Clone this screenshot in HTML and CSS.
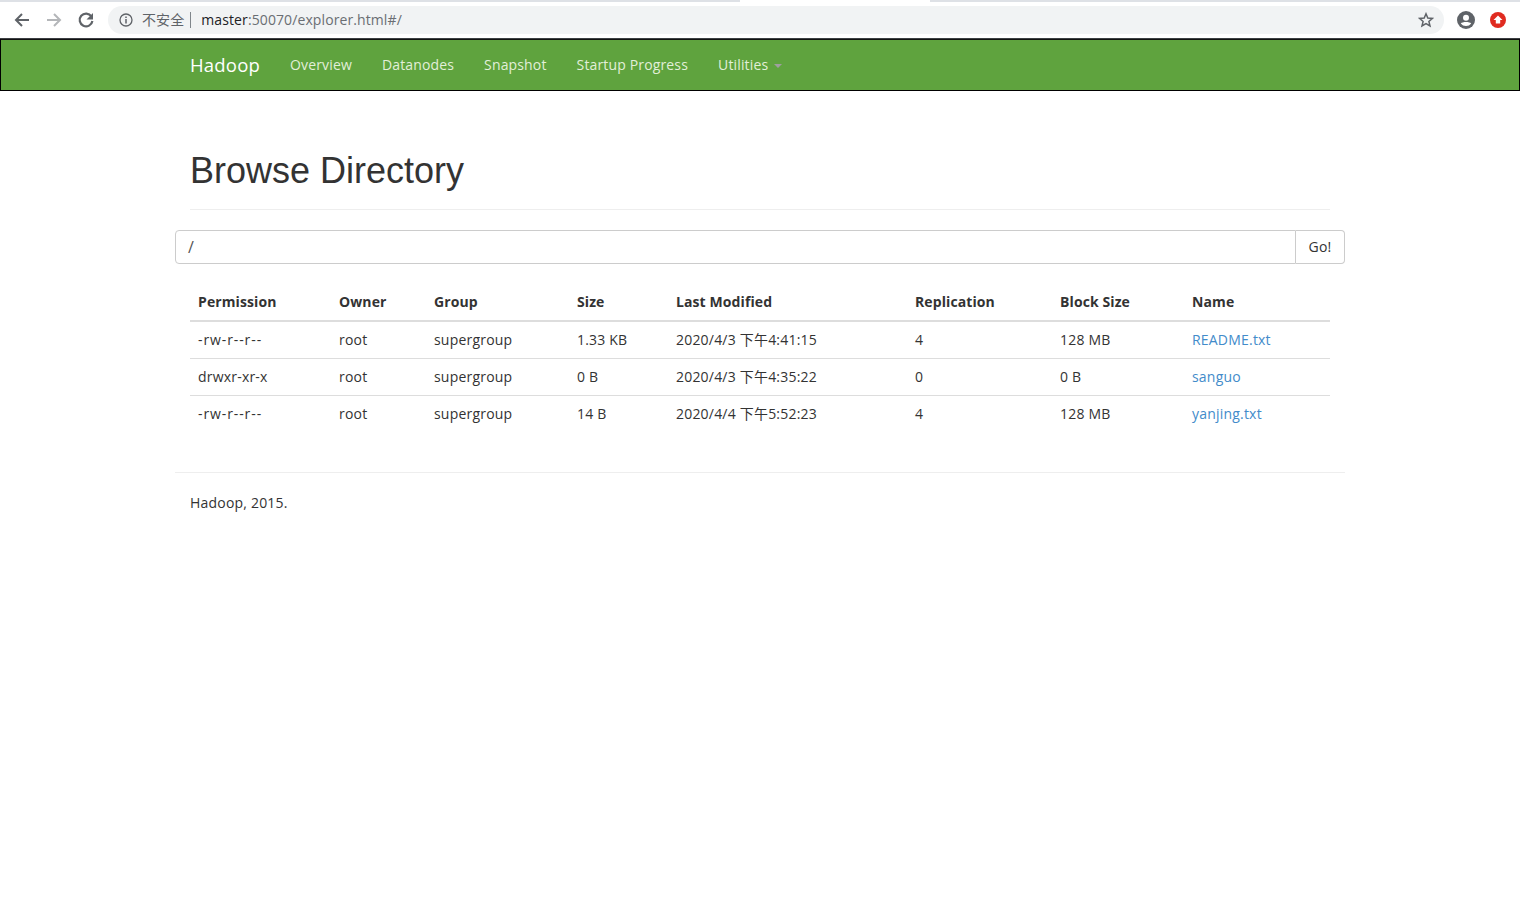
FILE: index.html
```html
<!DOCTYPE html>
<html lang="zh">
<head>
<meta charset="utf-8">
<title>Browsing HDFS</title>
<link rel="stylesheet" href="styles.css">
</head>
<body>
<div class="chrome">
  <div class="tabstrip"><div class="tab-active"></div></div>
  <div class="toolbar">
    <svg class="tool" width="18" height="18" viewBox="0 0 18 18"><path d="M16 9H3.500M9 3 3 9l6 6" fill="none" stroke="#5f6368" stroke-width="2"/></svg>
    <svg class="tool" width="18" height="18" viewBox="0 0 18 18"><path d="M2 9h12.500M9 3l6 6-6 6" fill="none" stroke="#b4b6b9" stroke-width="2"/></svg>
    <svg class="tool tool-last" width="18" height="18" viewBox="0 0 18 18"><path d="M14.400 5.400A6.400 6.400 0 1 0 15.400 10" fill="none" stroke="#5f6368" stroke-width="2.200"/><path d="M16 2v6.500h-6.500z" fill="#5f6368"/></svg>
    <div class="omnibox">
      <svg class="info" width="14" height="14" viewBox="0 0 14 14"><circle cx="7" cy="7" r="6" fill="none" stroke="#5f6368" stroke-width="1.300"/><path d="M7 6v4.500M7 3.500v1.500" stroke="#5f6368" stroke-width="1.500"/></svg>
      <span class="secure">不安全</span>
      <span class="sep"></span>
      <span class="url"><span class="host">master</span>:50070/explorer.html#/</span>
      <svg class="star" width="16" height="16" viewBox="0 0 16 16"><path d="M8 1.800 9.800 6l4.600.4-3.500 3 1.100 4.500L8 11.500l-4 2.400 1.100-4.500-3.500-3L6.200 6z" fill="none" stroke="#5f6368" stroke-width="1.500"/></svg>
    </div>
    <svg class="avatar" width="18" height="18" viewBox="0 0 18 18"><circle cx="9" cy="9" r="9" fill="#5f6368"/><circle cx="9" cy="6.800" r="3" fill="#fff"/><path d="M3.800 12.500c1.500-2 8.900-2 10.400 0a6.500 6.500 0 0 1-10.400 0z" fill="#fff"/></svg>
    <svg class="ext" width="16" height="16" viewBox="0 0 16 16"><circle cx="8" cy="8" r="8" fill="#e02b20"/><path d="M8 3.500 12.500 8H10.200v3.500H5.800V8H3.500z" fill="#fff"/></svg>
  </div>
</div>
<nav class="navbar">
  <div class="nav-inner">
    <a class="brand">Hadoop</a>
    <a class="nav-link">Overview</a>
    <a class="nav-link">Datanodes</a>
    <a class="nav-link">Snapshot</a>
    <a class="nav-link">Startup Progress</a>
    <a class="nav-link">Utilities <span class="caret"></span></a>
  </div>
</nav>
<main class="container">
  <div class="page-header"><h1>Browse Directory</h1></div>
  <div class="input-group">
    <div class="path-input">/</div>
    <div class="go-btn">Go!</div>
  </div>
  <div class="table-wrap">
    <table class="listing">
      <colgroup>
        <col class="c1"><col class="c2"><col class="c3"><col class="c4"><col class="c5"><col class="c6"><col class="c7"><col class="c8">
      </colgroup>
      <thead>
        <tr><th>Permission</th><th>Owner</th><th>Group</th><th>Size</th><th>Last Modified</th><th>Replication</th><th>Block Size</th><th>Name</th></tr>
      </thead>
      <tbody>
        <tr><td class="perm-wide">-rw-r--r--</td><td>root</td><td>supergroup</td><td>1.33 KB</td><td>2020/4/3 下午4:41:15</td><td>4</td><td>128 MB</td><td><a class="file">README.txt</a></td></tr>
        <tr><td>drwxr-xr-x</td><td>root</td><td>supergroup</td><td>0 B</td><td>2020/4/3 下午4:35:22</td><td>0</td><td>0 B</td><td><a class="file">sanguo</a></td></tr>
        <tr><td class="perm-wide">-rw-r--r--</td><td>root</td><td>supergroup</td><td>14 B</td><td>2020/4/4 下午5:52:23</td><td>4</td><td>128 MB</td><td><a class="file">yanjing.txt</a></td></tr>
      </tbody>
    </table>
  </div>
  <hr class="rule">
  <p class="footer">Hadoop, 2015.</p>
</main>
</body>
</html>
```
FILE: styles.css
```css
* { box-sizing: border-box; }
html, body { margin: 0; padding: 0; background: #fff; }
body {
  font-family: "Open Sans", "Noto Sans CJK SC", sans-serif;
  font-size: 14px;
  line-height: 20px;
  letter-spacing: 0.2px;
  color: #333;
  height: 911px;
  overflow: hidden;
}
.chrome { height: 39px; background: #fff; border-bottom: 1px solid #3c4043; }
.tabstrip { height: 2px; background: #dee1e6; padding-left: 740px; }
.tab-active { width: 190px; height: 2px; background: #fff; }
.toolbar { height: 36px; display: flex; align-items: center; padding: 0 15px 0 13px; letter-spacing: 0; }
.tool { margin-right: 14px; flex: none; }
.tool-last { margin-right: 13px; }
.omnibox {
  flex: 1;
  height: 28px;
  margin-right: 13px;
  border-radius: 14px;
  background: #f1f3f4;
  display: flex;
  align-items: center;
  padding: 0 10px 0 11px;
  font-size: 14px;
  letter-spacing: 0.1px;
  color: #5f6368;
}
.info { flex: none; margin-right: 9px; }
.secure { font-size: 14px; }
.sep { width: 1px; height: 16px; background: #80868b; margin: 0 9px 0 6px; }
.url { flex: 1; color: #6a6e73; margin-left: 1px; }
.host { color: #202124; }
.star { flex: none; }
.avatar { flex: none; margin-right: 15px; }
.ext { flex: none; margin-right: -1px; }

.navbar {
  height: 52px;
  background: #5fa33e;
  border: 1px solid #000;
  border-top-color: #111;
}
.nav-inner { width: 1170px; margin: 0 auto; padding: 0 0 0 15px; display: flex; align-items: center; height: 50px; letter-spacing: 0.15px; }
.brand { font-size: 18.500px; color: #fff; margin-right: 30px; letter-spacing: 0.2px; }
.nav-link { color: #e2efd9; margin-right: 30px; }
.caret {
  display: inline-block;
  width: 0; height: 0;
  margin-left: 2px;
  vertical-align: middle;
  border-top: 4px solid #9f9f9f;
  border-left: 4px solid transparent;
  border-right: 4px solid transparent;
}

.container { width: 1170px; margin: 0 auto; }
.page-header { margin: 60px 15px 20px; padding-bottom: 8px; border-bottom: 1px solid #eee; }
h1 {
  margin: 0 0 10px;
  font-family: "Liberation Sans", Arial, sans-serif;
  font-size: 36px;
  font-weight: 400;
  line-height: 40px;
  letter-spacing: 0;
  color: #333;
}
.input-group { display: flex; height: 34px; }
.path-input {
  flex: 1;
  border: 1px solid #ccc;
  border-radius: 4px 0 0 4px;
  padding: 6px 12px;
  font-size: 16px;
  color: #555;
}
.go-btn {
  width: 49px;
  border: 1px solid #ccc;
  border-left: 0;
  border-radius: 0 4px 4px 0;
  padding: 6px 0;
  text-align: center;
}
.table-wrap { padding: 0 15px; margin-top: 19px; }
.listing { width: 1140px; border-collapse: collapse; table-layout: fixed; margin-bottom: 20px; }
.c1 { width: 141px; } .c2 { width: 95px; } .c3 { width: 143px; } .c4 { width: 99px; }
.c5 { width: 239px; } .c6 { width: 145px; } .c7 { width: 132px; } .c8 { width: 146px; }
th { text-align: left; font-weight: 700; padding: 9px 8px 8px; border-bottom: 2px solid #ddd; letter-spacing: 0.1px; }
td { padding: 8px; border-bottom: 1px solid #ddd; }
.perm-wide { letter-spacing: 0.9px; }
tbody tr:last-child td { border-bottom: 0; }
.file { color: #428bca; }
.rule { border: 0; border-top: 1px solid #eee; margin: 40px 0 20px; }
.footer { margin: 0 15px; }
```
